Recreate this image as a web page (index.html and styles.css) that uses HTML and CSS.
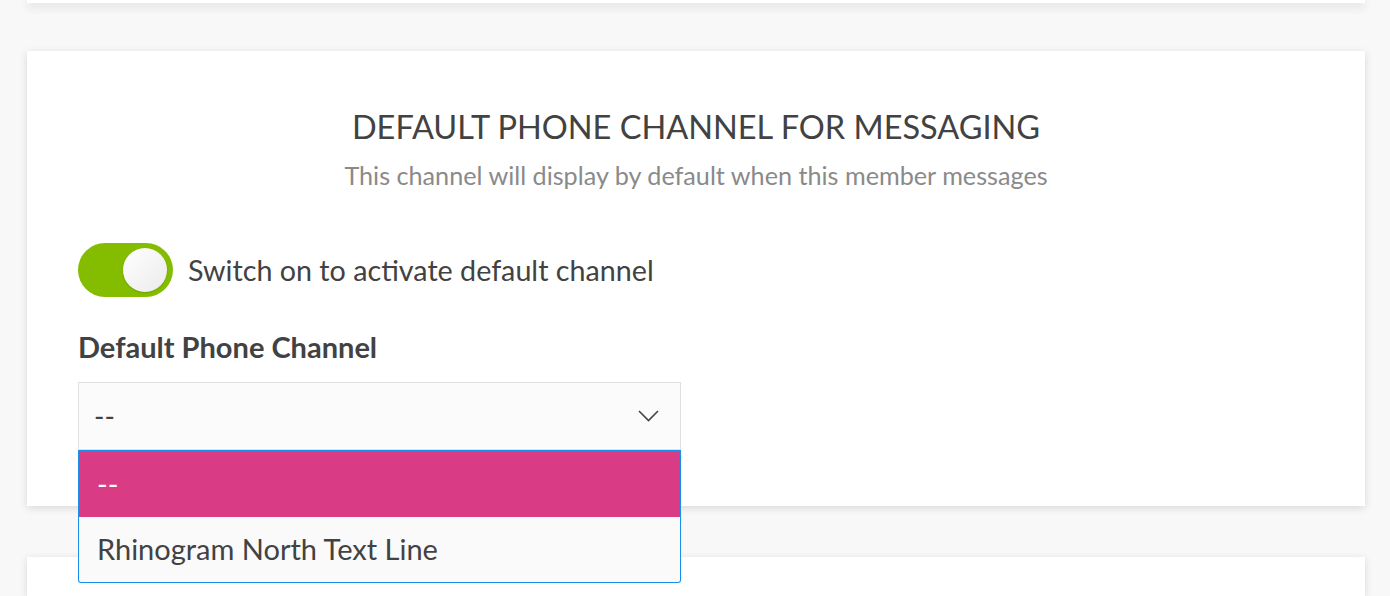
FILE: index.html
```html
<!DOCTYPE html>
<html>
<head>
<meta charset="utf-8">
<link rel="stylesheet" href="styles.css">
</head>
<body>
<div class="page">
  <div class="card card-top"></div>
  <div class="card card-main">
    <h2 class="title">DEFAULT PHONE CHANNEL FOR MESSAGING</h2>
    <p class="subtitle">This channel will display by default when this member messages</p>
    <div class="switch-row">
      <span class="toggle"><span class="knob"></span></span>
      <span class="switch-label">Switch on to activate default channel</span>
    </div>
    <div class="field-label">Default Phone Channel</div>
    <div class="select-wrap">
      <div class="select">
        <span class="select-value">--</span>
        <svg class="chevron" width="21" height="12" viewBox="0 0 21 12"><path d="M1 1 L10.5 10.5 L20 1" fill="none" stroke="#444" stroke-width="1.6"/></svg>
      </div>
      <ul class="menu">
        <li class="option active">--</li>
        <li class="option">Rhinogram North Text Line</li>
      </ul>
    </div>
  </div>
  <div class="card card-next"></div>
</div>
</body>
</html>
```
FILE: styles.css
```css
html, body {
  margin: 0;
  padding: 0;
}
body {
  background: #f8f8f8;
  font-family: Lato, "Open Sans", sans-serif;
  color: #424242;
  overflow: hidden;
  height: 596px;
}
.page {
  padding: 0 25px 0 27px;
  display: flex;
  flex-direction: column;
}
.card {
  background: #fff;
  box-shadow: 0 2px 8px rgba(0, 0, 0, 0.13);
}
.card-top {
  height: 3px;
  box-shadow: 0 3px 10px rgba(0, 0, 0, 0.2);
}
.card-main {
  margin-top: 48px;
  height: 455px;
  box-sizing: border-box;
  padding: 0 51px;
}
.card-next {
  margin-top: 51px;
  height: 39px;
}
.title {
  margin: 0;
  padding-top: 57px;
  text-align: center;
  font-weight: 400;
  font-size: 32.5px;
  line-height: 38px;
  color: #424242;
}
.subtitle {
  margin: 14px 0 0;
  text-align: center;
  font-size: 25.2px;
  line-height: 30px;
  color: #8a8a8a;
}
.switch-row {
  display: flex;
  align-items: center;
  gap: 15px;
  margin-top: 53px;
}
.toggle {
  width: 95px;
  height: 54px;
  border-radius: 27px;
  background: #84bc00;
  display: flex;
  align-items: center;
  justify-content: flex-end;
  padding-right: 6px;
  box-sizing: border-box;
}
.knob {
  width: 44px;
  height: 44px;
  border-radius: 50%;
  background: linear-gradient(135deg, #ffffff 0%, #ebebeb 100%);
  box-shadow: 0 1px 2px rgba(0, 0, 0, 0.15);
}
.switch-label {
  font-size: 28.7px;
  color: #424242;
}
.field-label {
  margin-top: 33px;
  font-weight: 700;
  font-size: 29px;
  line-height: 34px;
  color: #424242;
}
.select-wrap {
  position: relative;
  width: 603px;
  margin-top: 18px;
}
.select {
  height: 68px;
  box-sizing: border-box;
  border: 1px solid #e0e0e0;
  background: #fbfbfb;
  display: flex;
  align-items: center;
  justify-content: space-between;
  padding: 0 21px 0 15px;
}
.select-value {
  font-size: 28px;
  color: #424242;
}
.menu {
  position: absolute;
  left: 0;
  right: 0;
  top: 68px;
  margin: 0;
  padding: 0;
  list-style: none;
  border: 1px solid #1a8fea;
  border-top-width: 2px;
  border-radius: 0 0 3px 3px;
  background: #fafafa;
  overflow: hidden;
  z-index: 2;
}
.option {
  height: 65px;
  box-sizing: border-box;
  padding: 0 18px 2px;
  display: flex;
  align-items: center;
  font-size: 29px;
  color: #424242;
}
.option.active {
  background: #d93b85;
  color: #fff;
}
```
